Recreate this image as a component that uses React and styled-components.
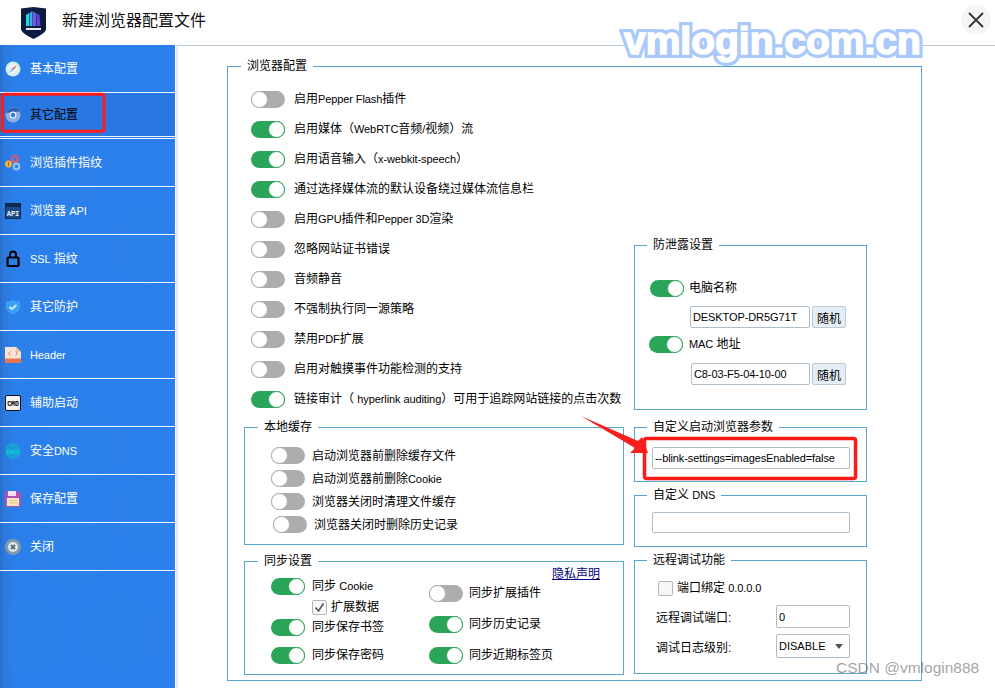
import styled, { createGlobalStyle } from "styled-components";

const Global = createGlobalStyle`
html, body { margin: 0; padding: 0; background: #fff; }
body { font-family: "Liberation Sans", "Noto Sans CJK SC", sans-serif; font-size: 12px; color: #000; }
* { box-sizing: border-box; }
`;

const Page = styled.div`
  position: relative;
  width: 995px;
  height: 688px;
  overflow: hidden;
  background: #fff;
`;

const Header = styled.header`
  display: flex;
  align-items: center;
  height: 45px;
  padding-left: 21px;
`;

const Title = styled.h1`
  margin: 0 0 3px 16px;
  font-size: 16px;
  font-weight: 400;
  line-height: 22px;
  color: #111;
`;

const CloseBtn = styled.div`
  display: flex;
  align-items: center;
  justify-content: center;
  margin: 0 4px 5px auto;
  width: 30px;
  height: 30px;
  border-radius: 50%;
  background: #f6f6f6;
`;

const Body = styled.div`
  display: flex;
  height: 643px;
`;

const Sidebar = styled.nav`
  position: relative;
  width: 175px;
  overflow: hidden;
  background: linear-gradient(90deg, #2b6dc6 0, #2a79df 4px, #2a7fea 12px, #2a7fea 100%);
`;

const HexBg = styled.svg`
  position: absolute;
  left: 0;
  top: 0;
`;

const NavRow = styled.div`
  position: relative;
  display: flex;
  align-items: center;
  gap: 9px;
  height: ${(p) => p.$h || 48}px;
  padding-left: 5px;
  border-bottom: 1px solid #f2f7fe;
  color: ${(p) => (p.$active ? "#000" : "#fff")};
  background: ${(p) => (p.$active ? "rgba(40,90,190,.18)" : "transparent")};
  font-size: 12px;
`;

const NavGap = styled.div`
  position: relative;
  height: 2px;
  border-bottom: 1px solid #f2f7fe;
`;

const Main = styled.main`
  flex: 1;
  padding: 11px 0 0 49px;
  border-top: 1px solid #b9c9d5;
  border-left: 2px solid #e3ebf1;
  margin-left: 1px;
`;

const Group = styled.fieldset`
  margin: ${(p) => p.$mt || 0}px 0 0 0;
  padding: ${(p) => p.$pt || 0}px 0 0 ${(p) => p.$pl || 0}px;
  width: ${(p) => p.$w || 233}px;
  height: ${(p) => p.$h}px;
  min-width: 0;
  border: 1px solid #57a5d0;
  border-radius: 0;
  & > legend {
    margin-left: ${(p) => (p.$lx || 13) - (p.$pl || 0)}px;
    padding: 0 6px;
    font-size: 12px;
    line-height: 18px;
  }
`;

const Columns = styled.div`
  display: flex;
  gap: 10px;
`;

const LeftCol = styled.div`
  width: 380px;
`;

const RightCol = styled.div`
  width: 233px;
`;

const SwitchList = styled.div`
  padding-left: 7px;
`;

const Row = styled.div`
  display: flex;
  align-items: center;
  height: ${(p) => p.$h || 20}px;
  gap: ${(p) => p.$gap ?? 7}px;
  margin-top: ${(p) => p.$mt || 0}px;
  margin-left: ${(p) => p.$ml || 0}px;
  white-space: nowrap;
`;

const Copy = styled.span`
  display: block;
  line-height: 16px;
`;

const Latin = styled.span`
  font-size: 11px;
  letter-spacing: -0.1px;
`;

const Track = styled.span`
  position: relative;
  flex: none;
  display: block;
  width: 34px;
  height: 17px;
  border-radius: 9px;
  background: ${(p) => (p.$on ? "#2aa55a" : "#adadad")};
`;

const Knob = styled.span`
  position: absolute;
  top: 0;
  left: ${(p) => (p.$on ? "17px" : "0")};
  width: 17px;
  height: 17px;
  border-radius: 50%;
  background: #fff;
  border: 1px solid ${(p) => (p.$on ? "#2aa55a" : "#adadad")};
`;

const Box = styled.span`
  display: flex;
  flex: none;
  align-items: center;
  justify-content: center;
  width: 15px;
  height: 15px;
  border: 1px solid #b5b5b5;
  border-radius: 2px;
  background: #f7f7f7;
`;

const SyncGrid = styled.div`
  display: flex;
  padding-left: 26px;
`;

const SyncLeft = styled.div`
  width: 158px;
  padding-top: 6px;
`;

const SyncRight = styled.div`
  width: 171px;
`;

const PrivacyLink = styled.a`
  display: block;
  margin: -3px 0 2px;
  text-align: right;
  line-height: 14px;
  color: #000080;
  text-decoration: underline;
`;

const Field = styled.input`
  display: block;
  flex: none;
  width: ${(p) => p.$w || 198}px;
  height: ${(p) => p.$h || 22}px;
  margin-left: ${(p) => p.$ml || 0}px;
  padding: 0 2px;
  border: 1px solid #adbdc9;
  border-radius: 2px;
  outline: none;
  background: #fff;
  font-family: inherit;
  font-size: 11px;
  letter-spacing: -0.1px;
  color: #000;
`;

const RandomBtn = styled.span`
  display: flex;
  flex: none;
  align-items: center;
  justify-content: center;
  width: 34px;
  height: 22px;
  border: 1px solid #bccbd6;
  border-radius: 2px;
  background: #e6eef5;
`;

const Label = styled.span`
  width: 120px;
  flex: none;
`;

const Select = styled.div`
  display: flex;
  align-items: center;
  justify-content: space-between;
  width: 74px;
  height: 24px;
  padding: 0 6px 0 2px;
  border: 1px solid #adbdc9;
  border-radius: 2px;
  font-size: 11px;
  &::after {
    content: "";
    border-left: 4.5px solid transparent;
    border-right: 4.5px solid transparent;
    border-top: 5px solid #555;
  }
`;

const Watermark = styled.div`
  position: absolute;
  left: 624px;
  top: 17px;
  font-family: "Liberation Sans", sans-serif;
  font-weight: 700;
  font-size: 39px;
  line-height: 48px;
  color: #fff;
  -webkit-text-stroke: 8px #aac9fb;
  paint-order: stroke fill;
  white-space: nowrap;
  &::after {
    content: "vmlogin.com.cn";
    position: absolute;
    left: 0;
    top: 0;
    -webkit-text-stroke: 1.5px #fff;
  }
`;

const Credit = styled.div`
  position: absolute;
  left: 836px;
  top: 659px;
  font-family: "Liberation Sans", sans-serif;
  font-size: 15.5px;
  line-height: 18px;
  color: rgba(100, 100, 100, 0.6);
  white-space: nowrap;
`;

const Markup = styled.svg`
  position: absolute;
  left: 0;
  top: 0;
  pointer-events: none;
`;

const Logo = () => (
  <svg width="25" height="32" viewBox="0 0 25 32">
    <path d="M0 1.500 12.500 0 25 1.500V22c0 3-6 7-12.500 10C6 29 0 25 0 22Z" fill="#0b1c40" />
    <path d="M5 8l3-2v13H5Z" fill="#27d7d2" />
    <path d="M8.500 6l3-2v15h-3Z" fill="#3ba8f0" />
    <path d="M12 5l3 1v13h-3Z" fill="#7a55e8" />
    <path d="M15.500 6l3 2 1 11h-4Z" fill="#5a45d8" />
    <rect x="5" y="21" width="15" height="2" fill="#dfe8f5" />
  </svg>
);

const CompassIcon = () => (
  <svg width="16" height="16" viewBox="0 0 16 16">
    <circle cx="8" cy="8" r="7.500" fill="#cdeee6" />
    <circle cx="8" cy="8" r="5.500" fill="#e4f3f6" />
    <path d="M12 4 8.800 8.800 7.200 7.200Z" fill="#ef5a4c" />
    <path d="M4 12 7.200 7.200 8.800 8.800Z" fill="#7fb4d8" />
  </svg>
);

const ChromeIcon = () => (
  <svg width="16" height="16" viewBox="0 0 16 16">
    <circle cx="8" cy="8" r="7.500" fill="#8eaee0" />
    <path d="M1 6a7.500 7.500 0 0 1 13.600-1.400L8 5Z" fill="#2d5fae" />
    <circle cx="8" cy="8" r="3.400" fill="#e8effa" />
    <circle cx="8" cy="8" r="2.200" fill="#2a78e0" />
  </svg>
);

const GearsIcon = () => (
  <svg width="16" height="16" viewBox="0 0 16 16">
    <circle cx="3.500" cy="9" r="3.400" fill="#f3b13c" />
    <rect x="3" y="7" width="1" height="4" fill="#a86d16" />
    <circle cx="10" cy="4" r="3" fill="none" stroke="#e2586a" strokeWidth="2" />
    <circle cx="11.500" cy="11.500" r="2.800" fill="none" stroke="#8fc0ee" strokeWidth="2.200" />
  </svg>
);

const ApiIcon = () => (
  <svg width="16" height="16" viewBox="0 0 16 16">
    <rect x="0.500" y="0.500" width="15" height="15" fill="#1c4c86" stroke="#0e2a50" />
    <rect x="1" y="1" width="14" height="3" fill="#0e2a50" />
    <text x="8" y="13" textAnchor="middle" fontSize="7" fontWeight="700" fontFamily="Liberation Mono, monospace" fill="#e8f1fb">API</text>
  </svg>
);

const LockIcon = () => (
  <svg width="16" height="17" viewBox="0 0 16 17">
    <path d="M5 8V4.500a3 3 0 0 1 6 0V8" fill="none" stroke="#000" strokeWidth="2" />
    <rect x="2.500" y="7.500" width="11" height="8.500" rx="1" fill="none" stroke="#000" strokeWidth="2.200" />
  </svg>
);

const ShieldIcon = () => (
  <svg width="16" height="16" viewBox="0 0 16 16">
    <path d="M8 1c2 1 4 1.500 7 1.500V8c0 3.500-3.500 6-7 7.500C4.500 14 1 11.500 1 8V2.500C4 2.500 6 2 8 1Z" fill="#3aa0f5" />
    <path d="M4.500 8l2.500 2L11.500 6" fill="none" stroke="#cfe8fb" strokeWidth="2" />
  </svg>
);

const HeaderIcon = () => (
  <svg width="16" height="16" viewBox="0 0 16 16">
    <path d="M0 0h11l5 5v11H0Z" fill="#f6e3d2" />
    <path d="M11 0l5 5h-5Z" fill="#e7c3a8" />
    <rect y="11.500" width="16" height="4.500" fill="#e9744e" />
    <path d="M5.500 4.500 3.500 6.500l2 2M10.500 4.500l2 2-2 2" fill="none" stroke="#e9744e" />
  </svg>
);

const CmdIcon = () => (
  <svg width="16" height="16" viewBox="0 0 16 16">
    <rect x="0.500" y="0.500" width="15" height="15" rx="1.500" fill="#f2f2f2" stroke="#111" />
    <text x="8" y="10.500" textAnchor="middle" fontSize="6.500" fontWeight="700" fontFamily="Liberation Mono, monospace" fill="#000">CMD</text>
  </svg>
);

const DnsIcon = () => (
  <svg width="16" height="16" viewBox="0 0 16 16">
    <circle cx="8" cy="8" r="7.200" fill="#1b9bd8" stroke="#10b4c8" />
    <text x="8" y="10.500" textAnchor="middle" fontSize="6" fontWeight="700" fontFamily="Liberation Sans, sans-serif" fill="#0fd0d8">DNS</text>
  </svg>
);

const SaveIcon = () => (
  <svg width="16" height="16" viewBox="0 0 16 16">
    <path d="M1 0h12l3 3v13H0V1Z" fill="#b44fb8" />
    <rect x="3" y="0" width="8" height="5" fill="#f0e2ee" />
    <rect x="2" y="7" width="12" height="8" fill="#f7e8bf" />
    <path d="M4 9.500h8M4 12h8" stroke="#dcc68c" />
  </svg>
);

const QuitIcon = () => (
  <svg width="16" height="16" viewBox="0 0 16 16">
    <circle cx="8" cy="8" r="8" fill="#7f9bab" />
    <circle cx="8" cy="8" r="5" fill="#dfe7ec" />
    <path d="M6 6l4 4M10 6l-4 4" stroke="#5b6c78" strokeWidth="1.800" />
  </svg>
);

// CJK stays at 12px, latin runs read as the smaller 11px of the original UI font
const Mixed = ({ text }) =>
  text.split(/([\x21-\x7e][\x20-\x7e]*[\x21-\x7e]|[\x21-\x7e])/).map((part, i) =>
    i % 2 ? <Latin key={i}>{part}</Latin> : part
  );

const Switch = ({ on = true }) => (
  <Track $on={on}>
    <Knob $on={on} />
  </Track>
);

const SwitchRow = ({ on, text, h = 30, gap = 9, ml, mt }) => (
  <Row $h={h} $gap={gap} $ml={ml} $mt={mt}>
    <Switch on={on} />
    <Copy><Mixed text={text} /></Copy>
  </Row>
);

const navItems = [
  { icon: <CompassIcon />, text: "基本配置", h: 48 },
  { icon: <ChromeIcon />, text: "其它配置", h: 44, active: true },
  { icon: <GearsIcon />, text: "浏览插件指纹", h: 48 },
  { icon: <ApiIcon />, text: "浏览器 API", h: 48 },
  { icon: <LockIcon />, text: "SSL 指纹", h: 48 },
  { icon: <ShieldIcon />, text: "其它防护", h: 48 },
  { icon: <HeaderIcon />, text: "Header", h: 48 },
  { icon: <CmdIcon />, text: "辅助启动", h: 48 },
  { icon: <DnsIcon />, text: "安全DNS", h: 48 },
  { icon: <SaveIcon />, text: "保存配置", h: 48 },
  { icon: <QuitIcon />, text: "关闭", h: 48 },
];

const browserSwitches = [
  [false, "启用Pepper Flash插件"],
  [true, "启用媒体（WebRTC音频/视频）流"],
  [true, "启用语音输入（x-webkit-speech）"],
  [true, "通过选择媒体流的默认设备绕过媒体流信息栏"],
  [false, "启用GPU插件和Pepper 3D渲染"],
  [false, "忽略网站证书错误"],
  [false, "音频静音"],
  [false, "不强制执行同一源策略"],
  [false, "禁用PDF扩展"],
  [false, "启用对触摸事件功能检测的支持"],
  [true, "链接审计（ hyperlink auditing）可用于追踪网站链接的点击次数"],
];

const hexes = [
  [70, 505], [150, 470], [30, 590], [120, 590], [85, 400], [20, 300], [150, 200], [60, 130],
];

const hexPath = (x, y) =>
  `M${x} ${y - 40}l35 20v40l-35 20l-35 -20v-40Z`;

export default function App() {
  return (
    <Page>
      <Global />
      <Header>
        <Logo />
        <Title>新建浏览器配置文件</Title>
        <CloseBtn>
          <svg width="16" height="16" viewBox="0 0 16 16">
            <path d="M1 1l14 14M15 1 1 15" stroke="#333" strokeWidth="1.800" />
          </svg>
        </CloseBtn>
      </Header>
      <Body>
        <Sidebar>
          <HexBg width="175" height="643">
            {hexes.map(([x, y]) => (
              <path key={x + "-" + y} d={hexPath(x, y)} fill="rgba(255,255,255,.012)" stroke="rgba(120,190,255,.07)" />
            ))}
          </HexBg>
          {navItems.map((item) => (
            <div key={item.text}>
              <NavRow $h={item.h} $active={item.active}>
                {item.icon}
                <Copy><Mixed text={item.text} /></Copy>
              </NavRow>
              {item.active && <NavGap />}
            </div>
          ))}
        </Sidebar>
        <Main>
          <Group $w={695} $h={624} $pt={9} $pl={16}>
            <legend>浏览器配置</legend>
            <Columns>
              <LeftCol>
                <SwitchList>
                  {browserSwitches.map(([on, text]) => (
                    <SwitchRow key={text} on={on} text={text} />
                  ))}
                </SwitchList>
                <Group $w={380} $h={127} $mt={4} $pt={8} $pl={26}>
                  <legend>本地缓存</legend>
                  <SwitchRow on={false} text="启动浏览器前删除缓存文件" h={23} gap={7} />
                  <SwitchRow on={false} text="启动浏览器前删除Cookie" h={23} gap={7} />
                  <SwitchRow on={false} text="浏览器关闭时清理文件缓存" h={23} gap={7} />
                  <SwitchRow on={false} text="浏览器关闭时删除历史记录" h={23} gap={7} ml={2} />
                </Group>
                <Group $w={380} $h={123} $mt={7}>
                  <legend>同步设置</legend>
                  <SyncGrid>
                    <SyncLeft>
                      <SwitchRow text="同步 Cookie" h={20} gap={7} />
                      <Row $mt={1} $ml={41} $gap={4}>
                        <Box>
                          <svg width="11" height="11" viewBox="0 0 11 11">
                            <path d="M1.500 5.500 4.500 9 9.500 1.500" fill="none" stroke="#555" strokeWidth="1.600" />
                          </svg>
                        </Box>
                        <Copy>扩展数据</Copy>
                      </Row>
                      <SwitchRow text="同步保存书签" h={20} gap={7} />
                      <SwitchRow text="同步保存密码" h={20} gap={7} mt={8} />
                    </SyncLeft>
                    <SyncRight>
                      <PrivacyLink>隐私声明</PrivacyLink>
                      <SwitchRow on={false} text="同步扩展插件" h={20} gap={6} />
                      <SwitchRow text="同步历史记录" h={20} gap={6} mt={11} />
                      <SwitchRow text="同步近期标签页" h={20} gap={6} mt={11} />
                    </SyncRight>
                  </SyncGrid>
                </Group>
              </LeftCol>
              <RightCol>
                <Group $h={174} $mt={152} $pt={24} $pl={15} $lx={12}>
                  <legend>防泄露设置</legend>
                  <SwitchRow text="电脑名称" h={20} gap={5} />
                  <Row $h={22} $mt={8} $gap={2}>
                    <Field $w={120} $ml={40} defaultValue="DESKTOP-DR5G71T" readOnly />
                    <RandomBtn>随机</RandomBtn>
                  </Row>
                  <SwitchRow text="MAC 地址" h={20} gap={6} mt={6} ml={-1} />
                  <Row $h={22} $mt={9} $gap={2}>
                    <Field $w={119} $ml={41} defaultValue="C8-03-F5-04-10-00" readOnly />
                    <RandomBtn>随机</RandomBtn>
                  </Row>
                </Group>
                <Group $h={64} $mt={8} $pt={11} $pl={17} $lx={12}>
                  <legend>自定义启动浏览器参数</legend>
                  <Field defaultValue="--blink-settings=imagesEnabled=false" readOnly />
                </Group>
                <Group $h={61} $mt={4} $pt={8} $pl={17} $lx={12}>
                  <legend><Mixed text="自定义 DNS" /></legend>
                  <Field $h={21} readOnly />
                </Group>
                <Group $h={123} $mt={4} $pt={9} $pl={21} $lx={12}>
                  <legend>远程调试功能</legend>
                  <Row $ml={2} $gap={4}>
                    <Box />
                    <Copy><Mixed text="端口绑定 0.0.0.0" /></Copy>
                  </Row>
                  <Row $h={23} $mt={7} $gap={0}>
                    <Label>远程调试端口:</Label>
                    <Field $w={74} $h={23} defaultValue="0" readOnly />
                  </Row>
                  <Row $h={24} $mt={6} $gap={0}>
                    <Label>调试日志级别:</Label>
                    <Select>DISABLE</Select>
                  </Row>
                </Group>
              </RightCol>
            </Columns>
          </Group>
        </Main>
      </Body>
      <Watermark>vmlogin.com.cn</Watermark>
      <Credit>CSDN @vmlogin888</Credit>
      <Markup width="995" height="688">
        <path d="M581 416 638 441 642 437 648 453 630 453 635 448Z" fill="#fa1e1e" />
        <rect x="2.500" y="94.200" width="101.500" height="37" rx="2" fill="none" stroke="#ff1a1a" strokeWidth="3" />
        <rect x="644.500" y="438.500" width="211" height="40" rx="2" fill="none" stroke="#ff1a1a" strokeWidth="3.500" />
      </Markup>
    </Page>
  );
}
